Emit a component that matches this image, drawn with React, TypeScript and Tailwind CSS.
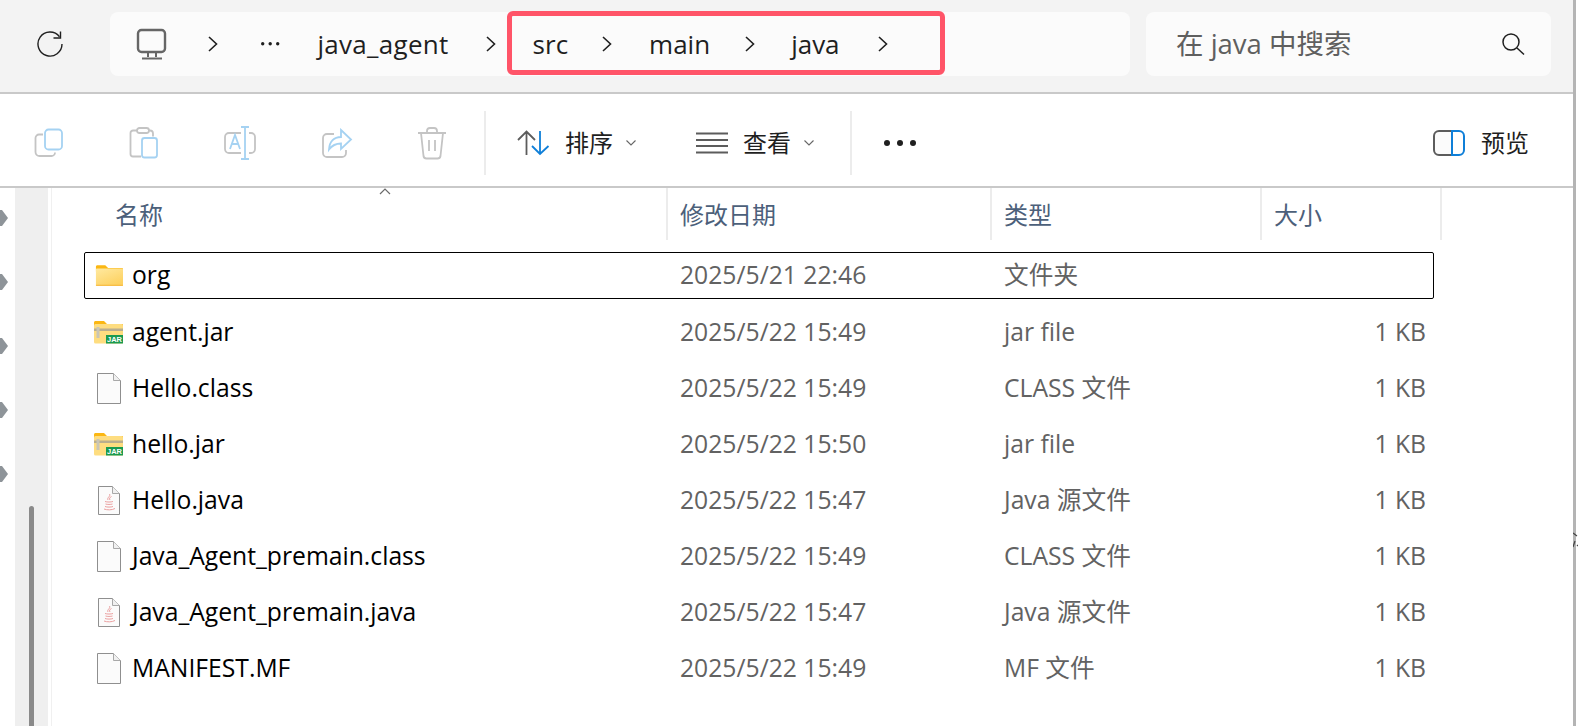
const SANS = "font-['Open_Sans','Noto_Sans_CJK_SC',sans-serif]";

type FileKind = "folder" | "jar" | "blank" | "java";

type FileRow = {
  name: string;
  date: string;
  type: string;
  size: string;
  kind: FileKind;
};

const files: FileRow[] = [
  { name: "agent.jar", date: "2025/5/22 15:49", type: "jar file", size: "1 KB", kind: "jar" },
  { name: "Hello.class", date: "2025/5/22 15:49", type: "CLASS 文件", size: "1 KB", kind: "blank" },
  { name: "hello.jar", date: "2025/5/22 15:50", type: "jar file", size: "1 KB", kind: "jar" },
  { name: "Hello.java", date: "2025/5/22 15:47", type: "Java 源文件", size: "1 KB", kind: "java" },
  { name: "Java_Agent_premain.class", date: "2025/5/22 15:49", type: "CLASS 文件", size: "1 KB", kind: "blank" },
  { name: "Java_Agent_premain.java", date: "2025/5/22 15:47", type: "Java 源文件", size: "1 KB", kind: "java" },
  { name: "MANIFEST.MF", date: "2025/5/22 15:49", type: "MF 文件", size: "1 KB", kind: "blank" },
];

const Chevron = ({ className }: { className?: string }) => (
  <svg width="10" height="16" viewBox="0 0 10 16" className={className} fill="none" stroke="#1f1f1f" strokeWidth="1.6">
    <path d="M1 1l7.5 7L1 15" />
  </svg>
);

const Caret = ({ className }: { className?: string }) => (
  <svg width="10" height="6" viewBox="0 0 10 6" className={className} fill="none" stroke="#666" strokeWidth="1.1">
    <path d="M0.5 0.5L5 5l4.5-4.5" />
  </svg>
);

const Dots = ({ r = 1.5, gap = 9, fill = "#1f1f1f" }: { r?: number; gap?: number; fill?: string }) => (
  <svg width={gap * 2 + r * 2 + 2} height={r * 2 + 2}>
    <circle cx={r + 1} cy={r + 1} r={r} fill={fill} />
    <circle cx={r + 1 + gap} cy={r + 1} r={r} fill={fill} />
    <circle cx={r + 1 + gap * 2} cy={r + 1} r={r} fill={fill} />
  </svg>
);

const FileIcon = ({ kind }: { kind: FileKind }) => {
  if (kind === "folder") {
    return (
      <svg width="28" height="23" viewBox="0 0 30 24">
        <defs>
          <linearGradient id="folderFill" x1="0" y1="0" x2="0.6" y2="1">
            <stop offset="0" stopColor="#ffe9a0" />
            <stop offset="1" stopColor="#fdd262" />
          </linearGradient>
        </defs>
        <path d="M1 2.5C1 1.7 1.7 1 2.5 1h8.5l3 3h15c.6 0 1 .4 1 1v3H1z" fill="#fbb713" />
        <rect x="1" y="4.5" width="29" height="18.5" rx="1" fill="url(#folderFill)" />
        <path d="M1 22.5h29" stroke="#f5b432" />
      </svg>
    );
  }
  if (kind === "jar") {
    return (
      <svg width="29" height="24" viewBox="0 0 29 24">
        <path d="M0 2.5C0 1.700.7 1 1.500 1H10l3 3h15c.6 0 1 .4 1 1v3H0z" fill="#fbb713" />
        <rect x="0" y="4" width="29" height="19.500" rx="1.500" fill="#fedd80" />
        <rect x="0" y="8.500" width="29" height="2.500" fill="#b9ae8e" />
        <rect x="2.500" y="7" width="3" height="11" fill="#c9c5b5" />
        <rect x="12" y="15" width="17" height="8.500" fill="#1a9a50" />
        <text x="20.500" y="22.200" textAnchor="middle" fontSize="7.500" fontWeight="700" fill="#fff" fontFamily="Liberation Sans">JAR</text>
      </svg>
    );
  }
  const java = kind === "java";
  return (
    <svg width={java ? 22 : 24} height={java ? 29 : 31} viewBox={java ? "0 0 22 29" : "0 0 24 31"}>
      <path
        d={java ? "M.5.5h14l7 7v21H.5z" : "M.5.5h16l7 7v23H.5z"}
        fill="#fbfbfb"
        stroke="#8f8f8f"
      />
      <path d={java ? "M14.5.5v7h7" : "M16.5.5v7h7"} fill="#f0f0f0" stroke="#a8a8a8" />
      {java && (
        <g fill="none" stroke="#eba0a0" strokeWidth="1">
          <path d="M11.5 8c1.500 2.500-3 3.500-1.500 6" />
          <path d="M13.500 10.500c-2 1-2.500 2-1.500 3.500" />
          <path d="M7 15.500c2 .7 6 .7 8 0M7.500 18c2 .6 5 .6 7 0M7 20.500c2 .8 6 .8 8 0" />
          <path d="M6 23c3 1.200 8 1.200 11-.5" />
        </g>
      )}
    </svg>
  );
};

const Crumb = ({ label, className }: { label: string; className: string }) => (
  <span className={`text-[26px] leading-none text-[#1f1f1f] ${className}`}>{label}</span>
);

const TopBar = () => (
  <div className="flex h-[92px] items-start bg-[#f3f3f3] pt-3">
    <div className="flex h-[64px] w-[110px] items-center justify-center pr-[10px]">
      <svg width="26" height="26" viewBox="0 0 26 26" fill="none" stroke="#1f1f1f" strokeWidth="1.400">
        <path d="M25 13A12 12 0 1 1 22.500 5.700" />
        <path d="M23.500 .5v6.500h-7" />
      </svg>
    </div>
    <div className="relative flex h-[64px] w-[1020px] items-center rounded-lg bg-[#fbfbfb]">
      <svg width="32" height="33" viewBox="0 0 32 33" className="ml-[26px]" fill="none" stroke="#666" strokeWidth="2.4">
        <rect x="2" y="2" width="27" height="22" rx="3.5" />
        <path d="M12 24v5M20 24v5" strokeWidth="2" />
        <path d="M6 30.500h20" strokeWidth="2" />
      </svg>
      <Chevron className="ml-[40px]" />
      <span className="ml-[42px]">
        <Dots r={1.7} gap={7.5} />
      </span>
      <Crumb label="java_agent" className="ml-[37px] tracking-[0.3px]" />
      <Chevron className="ml-[37px]" />
      <Crumb label="src" className="ml-[37px]" />
      <Chevron className="ml-[34px]" />
      <Crumb label="main" className="ml-[37px]" />
      <Chevron className="ml-[35px]" />
      <Crumb label="java" className="ml-[36px]" />
      <Chevron className="ml-[38px]" />
      <div className="absolute left-[397px] top-[-1px] h-[64px] w-[438px] rounded-[6px] border-[5px] border-[#ff5468]" />
    </div>
    <div className="ml-4 flex h-[64px] w-[405px] items-center rounded-lg bg-[#fbfbfb] pl-[30px] pr-[26px]">
      <span className="flex-1 text-[27.5px] leading-none text-[#5f5f5f]">在 java 中搜索</span>
      <svg width="24" height="24" viewBox="0 0 24 24" fill="none" stroke="#1f1f1f" strokeWidth="1.5">
        <circle cx="10" cy="10" r="8" />
        <path d="M16 16l7 6.500" />
      </svg>
    </div>
  </div>
);

const Toolbar = () => (
  <div className="flex h-[96px] items-center border-t-2 border-b-2 border-[#c9c9c9] bg-white pt-[6px]">
    <svg width="30" height="30" viewBox="0 0 30 30" className="ml-[34px]" fill="none" strokeWidth="1.8">
      <path d="M9 6.500H5a3.500 3.500 0 0 0-3.500 3.500v14A4 4 0 0 0 5.500 28h12a3.500 3.500 0 0 0 3.500-3.500" stroke="#c4c4c4" />
      <rect x="11" y="1.500" width="17" height="20" rx="3.500" stroke="#a5d2f2" />
    </svg>
    <svg width="30" height="32" viewBox="0 0 30 32" className="ml-[65px]" fill="none" strokeWidth="1.8">
      <path d="M8 3.500H4a2.500 2.500 0 0 0-2.500 2.500v21A2.500 2.500 0 0 0 4 29.500h8M20 3.500h1a3 3 0 0 1 3 3v3" stroke="#c4c4c4" />
      <rect x="8" y="1" width="12" height="5" rx="2.500" stroke="#c4c4c4" />
      <rect x="13" y="11" width="15" height="19.500" rx="2.500" stroke="#a5d2f2" />
    </svg>
    <svg width="34" height="34" viewBox="0 0 34 34" className="ml-[64px]" fill="none" strokeWidth="1.8">
      <path d="M18 7H6a4 4 0 0 0-4 4v12a4 4 0 0 0 4 4h12M26 7h2a4 4 0 0 1 4 4v12a4 4 0 0 1-4 4h-2" stroke="#c4c4c4" />
      <path d="M18 1h8M18 33h8M22 1v32M7 23l5-14 5 14M9 18h6" stroke="#a5d2f2" />
    </svg>
    <svg width="32" height="31" viewBox="0 0 32 31" className="ml-[64px]" fill="none" strokeWidth="1.8">
      <path d="M13 6H6a4 4 0 0 0-4 4v15a4 4 0 0 0 4 4h15a4 4 0 0 0 4-4v-3" stroke="#c4c4c4" />
      <path d="M20 2l10 9.500-10 9.500v-5.500c-6 0-9 2-12 6 .5-8 5-12.500 12-12.500z" stroke="#a5d2f2" />
    </svg>
    <svg width="30" height="33" viewBox="0 0 30 33" className="ml-[64px]" fill="none" stroke="#c4c4c4" strokeWidth="1.8">
      <path d="M1 6h28M10 6V4a3 3 0 0 1 3-3h4a3 3 0 0 1 3 3v2M4 6l2.500 23a3 3 0 0 0 3 2.500h11a3 3 0 0 0 3-2.500L26 6M12 13v11M18 13v11" />
    </svg>
    <div className="ml-[37px] h-[64px] w-[2px] bg-[#ececec]" />
    <svg width="33" height="26" viewBox="0 0 33 26" className="ml-[31px]" fill="none" strokeWidth="1.8">
      <path d="M9.500 25V2M1 10l8.500-8.500L18 10" stroke="#5c5c5c" />
      <path d="M23 1v23M15 16l8 8 8.500-8" stroke="#0f7fd8" />
    </svg>
    <span className="ml-[15px] text-[24px] leading-none text-[#1f1f1f]">排序</span>
    <Caret className="ml-[13px]" />
    <svg width="32" height="22" viewBox="0 0 32 22" className="ml-[60px]" stroke="#5c5c5c" strokeWidth="1.8">
      <path d="M0 1.500h32M0 8h32M0 14h32M0 20.500h32" />
    </svg>
    <span className="ml-[15px] text-[24px] leading-none text-[#1f1f1f]">查看</span>
    <Caret className="ml-[13px]" />
    <div className="ml-[36px] h-[64px] w-[2px] bg-[#ececec]" />
    <span className="ml-[31px]">
      <Dots r={3} gap={13} />
    </span>
    <svg width="32" height="26" viewBox="0 0 32 26" className="ml-[516px]" fill="none" strokeWidth="2">
      <path d="M19 1H6a5 5 0 0 0-5 5v14a5 5 0 0 0 5 5h13" fill="#fbfbfb" stroke="#5c5c5c" />
      <path d="M19 1h7a5 5 0 0 1 5 5v14a5 5 0 0 1-5 5h-7z" stroke="#0f7fd8" />
    </svg>
    <span className="ml-[16px] text-[24px] leading-none text-[#1f1f1f]">预览</span>
  </div>
);

const Sidebar = () => (
  <div className="relative flex w-[52px] shrink-0 border-r-[1px] border-[#f0f0f0]">
    <div className="flex w-[15px] flex-col items-start gap-[40px] pt-[18px]">
      {[0, 1, 2, 3, 4].map((i) => (
        <svg key={i} width="8" height="24" viewBox="0 0 8 24">
          <path d="M0 4h2l6 8-6 8H0z" fill="#8e9499" />
        </svg>
      ))}
    </div>
    <div className="flex w-[33px] justify-center bg-[#efefef]">
      <div className="mt-[318px] h-[300px] w-[5px] rounded-t-full bg-[#8a8a8a]" />
    </div>
  </div>
);

const Row = ({ file }: { file: FileRow }) => (
  <div className="flex h-[56px] items-center text-[24.700px] leading-none">
    <div className="flex w-[48px] justify-center pl-[1px]">
      <FileIcon kind={file.kind} />
    </div>
    <div className="w-[548px] text-black">{file.name}</div>
    <div className="w-[324px] text-[#626262]">{file.date}</div>
    <div className="w-[270px] text-[#626262]">{file.type}</div>
    <div className="w-[152px] text-right text-[#626262]">{file.size}</div>
  </div>
);

const FileList = () => (
  <div className="min-w-0 flex-1 bg-white pl-[32px]">
    <div className="relative flex h-[52px] text-[24px] leading-none text-[#4c607a]">
      <div className="flex w-[584px] items-center border-r-2 border-[#ececec] pl-[31px] pt-[2px]">名称</div>
      <div className="flex w-[324px] items-center border-r-2 border-[#ececec] pl-[12px] pt-[2px]">修改日期</div>
      <div className="flex w-[270px] items-center border-r-2 border-[#ececec] pl-[12px] pt-[2px]">类型</div>
      <div className="flex w-[180px] items-center border-r-2 border-[#ececec] pl-[12px] pt-[2px]">大小</div>
      <svg width="12" height="7" viewBox="0 0 12 7" className="absolute left-[295px] top-[0px]" fill="none" stroke="#6a6a6a" strokeWidth="1.2">
        <path d="M1 6l5-5 5 5" />
      </svg>
    </div>
    <div className="mt-[12px] mb-[5px] flex h-[47px] w-[1350px] items-center rounded-[2px] border border-black text-[24.700px] leading-none">
      <div className="flex w-[47px] justify-center">
        <FileIcon kind="folder" />
      </div>
      <div className="w-[548px] text-black">org</div>
      <div className="w-[324px] text-[#626262]">2025/5/21 22:46</div>
      <div className="text-[#626262]">文件夹</div>
    </div>
    {files.map((f) => (
      <Row key={f.name} file={f} />
    ))}
  </div>
);

export default function App() {
  return (
    <div className={`flex h-[726px] w-[1578px] overflow-hidden bg-white ${SANS}`}>
      <div className="flex min-w-0 flex-1 flex-col">
        <TopBar />
        <Toolbar />
        <div className="flex min-h-0 flex-1">
          <Sidebar />
          <FileList />
        </div>
      </div>
      <div className="relative w-[3px] shrink-0 bg-[#b4b4b4]">
        <svg width="5" height="16" viewBox="0 0 5 16" className="absolute left-0 top-[532px]" fill="none" stroke="#444" strokeWidth="1.200">
          <path d="M0 1l4 3M2 9l-2 6M4 14l1-1" />
        </svg>
      </div>
      <div className="w-[2px] shrink-0 bg-white" />
    </div>
  );
}
